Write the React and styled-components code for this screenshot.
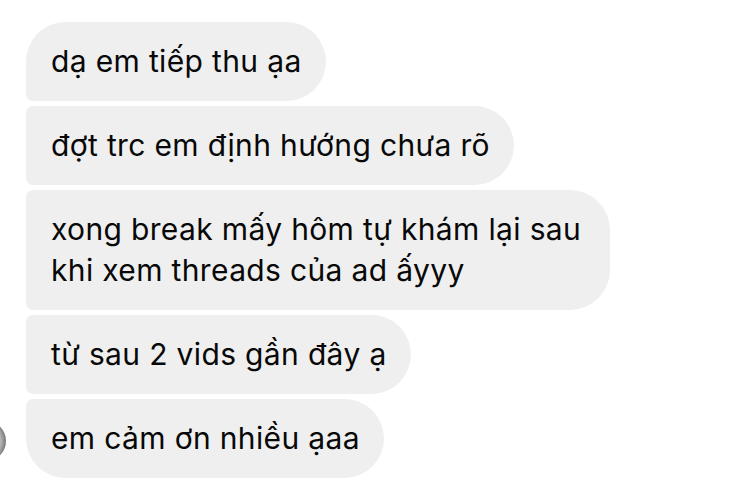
import React from "react";
import styled, { createGlobalStyle } from "styled-components";

const messages = [
  { id: 1, text: "dạ em tiếp thu ạa" },
  { id: 2, text: "đợt trc em định hướng chưa rõ" },
  { id: 3, text: "xong break mấy hôm tự khám lại sau khi xem threads của ad ấyyy" },
  { id: 4, text: "từ sau 2 vids gần đây ạ" },
  { id: 5, text: "em cảm ơn nhiều ạaa" },
];

const App = () => {
  return (
    <>
      <GlobalStyle />
      <Thread>
        <Avatar />
        <Group>
          {messages.map((m, i) => (
            <Bubble
              key={m.id}
              $first={i === 0}
              $last={i === messages.length - 1}
            >
              {m.text}
            </Bubble>
          ))}
        </Group>
      </Thread>
    </>
  );
};

const GlobalStyle = createGlobalStyle`
  html, body {
    margin: 0;
    padding: 0;
    background: #ffffff;
    overflow: hidden;
  }
  body {
    font-family: Inter, "Liberation Sans", Arial, sans-serif;
    -webkit-font-smoothing: antialiased;
  }
`;

const Thread = styled.div`
  display: flex;
  align-items: flex-end;
  gap: 20px;
  margin-left: -34px;
  padding-top: 22px;
`;

const Avatar = styled.div`
  flex: none;
  width: 40px;
  height: 40px;
  margin-bottom: 17px;
  border-radius: 50%;
  background: radial-gradient(circle at 40% 50%, #d8d8d8 0%, #b4b4b4 60%, #5a5a5a 85%, #3a3a3a 100%);
`;

const Group = styled.div`
  display: flex;
  flex-direction: column;
  align-items: flex-start;
  gap: 5px;
`;

const Bubble = styled.div`
  box-sizing: border-box;
  max-width: 584px;
  padding: 19px 24px 19px 25px;
  background: #efefef;
  color: #080808;
  font-size: 30px;
  line-height: 41px;
  letter-spacing: 0.35px;
  border-radius: ${(p) => (p.$first ? "40px" : "7px")} 40px 40px
    ${(p) => (p.$last ? "40px" : "7px")};
`;

export default App;
